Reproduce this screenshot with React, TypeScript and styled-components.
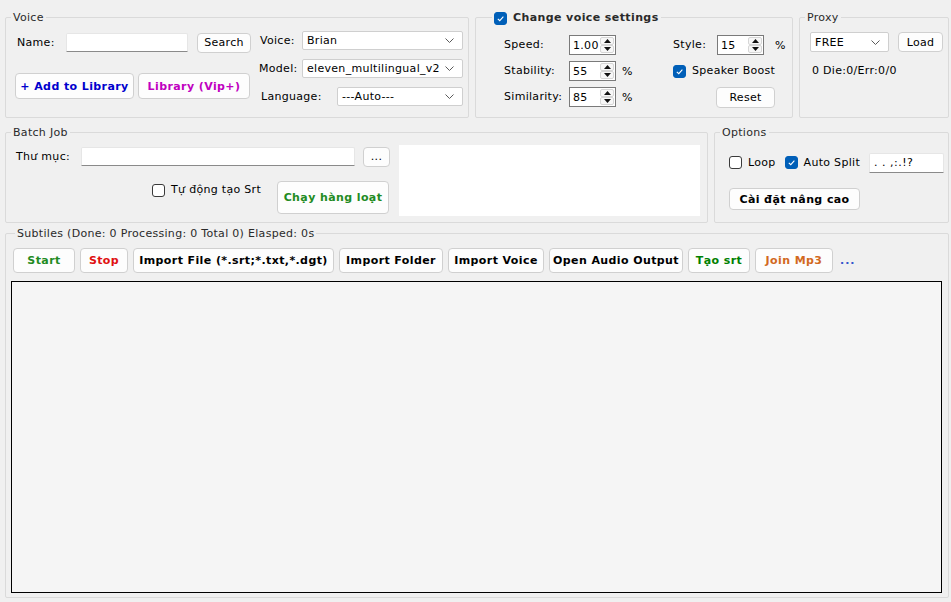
import React from "react";
import styled, { createGlobalStyle } from "styled-components";

const GlobalStyle = createGlobalStyle`
  html, body {
    margin: 0;
    padding: 0;
    background: #f0f0f0;
  }
  body {
    font-family: "DejaVu Sans", Verdana, sans-serif;
    font-size: 11px;
    letter-spacing: 0.3px;
    color: #000;
  }
  #root {
    width: 951px;
    height: 602px;
    overflow: hidden;
  }
`;

const Page = styled.div`
  display: flex;
  flex-direction: column;
  padding: 17px 0 0 5px;
`;

const Row = styled.div<{ $gap: number; $top?: number }>`
  display: flex;
  gap: ${(p) => p.$gap}px;
  margin-top: ${(p) => p.$top ?? 0}px;
`;

const Group = styled.section<{ $w: number; $h: number }>`
  width: ${(p) => p.$w}px;
  height: ${(p) => p.$h}px;
  box-sizing: border-box;
  border: 1px solid #dadada;
  border-radius: 2px;
  display: flex;
  flex-direction: column;
`;

const GroupTitle = styled.div<{ $inset?: number; $bold?: boolean }>`
  display: flex;
  align-items: center;
  gap: 6px;
  align-self: flex-start;
  height: 14px;
  line-height: 14px;
  margin: -7px 0 -1px ${(p) => p.$inset ?? 5}px;
  padding: 0 2px;
  background: #f0f0f0;
  color: #2a2a2a;
  font-weight: ${(p) => (p.$bold ? 700 : 400)};
  letter-spacing: ${(p) => (p.$bold ? "0.4px" : "0.3px")};
  white-space: nowrap;
`;

const Label = styled.span<{ $w?: number; $ml?: number }>`
  display: inline-block;
  width: ${(p) => (p.$w ? `${p.$w}px` : "auto")};
  margin-left: ${(p) => p.$ml ?? 0}px;
  flex: none;
  white-space: nowrap;
  line-height: 14px;
`;

const TextField = styled.div<{ $w: number; $h?: number; $ml?: number }>`
  width: ${(p) => p.$w}px;
  height: ${(p) => p.$h ?? 19}px;
  margin-left: ${(p) => p.$ml ?? 0}px;
  box-sizing: border-box;
  background: #fff;
  border: 1px solid #e6e6e6;
  border-bottom-color: #8a8a8a;
  border-radius: 2px 2px 0 0;
  padding: 2px 4px 0;
  line-height: 14px;
  letter-spacing: 0.5px;
  flex: none;
`;

const Button = styled.button<{ $w: number; $h: number; $color?: string; $bold?: boolean; $ml?: number }>`
  width: ${(p) => p.$w}px;
  height: ${(p) => p.$h}px;
  margin-left: ${(p) => p.$ml ?? 0}px;
  box-sizing: border-box;
  flex: none;
  padding: 0;
  background: #fdfdfd;
  border: 1px solid #d0d0d0;
  border-radius: 4px;
  font-family: inherit;
  font-size: 11px;
  font-weight: ${(p) => (p.$bold ? 700 : 400)};
  letter-spacing: ${(p) => (p.$bold ? "0.4px" : "0.3px")};
  color: ${(p) => p.$color ?? "#000"};
  white-space: nowrap;
  cursor: default;
`;

const ComboBox = styled.div<{ $w: number; $h?: number; $left?: boolean }>`
  width: ${(p) => p.$w}px;
  height: ${(p) => p.$h ?? 19}px;
  margin-left: ${(p) => (p.$left ? "0" : "auto")};
  box-sizing: border-box;
  flex: none;
  background: #fff;
  border: 1px solid #cfcfcf;
  border-radius: 2px;
  display: flex;
  align-items: center;
  justify-content: space-between;
  padding: 0 8px 0 4px;
`;

const CheckBox = styled.span<{ $on?: boolean }>`
  width: 13px;
  height: 13px;
  box-sizing: border-box;
  border-radius: 3px;
  flex: none;
  display: inline-flex;
  align-items: center;
  justify-content: center;
  background: ${(p) => (p.$on ? "#005fb8" : "#fff")};
  border: 1px solid ${(p) => (p.$on ? "#005fb8" : "#3a3a3a")};
`;

const CheckRow = styled.label`
  display: inline-flex;
  align-items: center;
  gap: 6px;
  white-space: nowrap;
  line-height: 14px;
`;

const NumBox = styled.div`
  width: 47px;
  height: 20px;
  box-sizing: border-box;
  background: #fff;
  border: 1px solid #7a7a7a;
  display: flex;
  align-items: center;
  padding-left: 3px;
`;

const NumValue = styled.span`
  flex: 1;
`;

const Spinner = styled.div`
  width: 14px;
  height: 16px;
  margin-right: 1px;
  display: flex;
  flex-direction: column;
`;

const SpinHalf = styled.div`
  flex: 1;
  display: flex;
  align-items: center;
  justify-content: center;
  border: 1px solid #d6d6d6;
  border-radius: 2px;
  background: #f7f7f7;
`;

/* voice */
const VoiceBody = styled.div`
  display: flex;
  gap: 8px;
  padding-left: 9px;
`;

const VoiceLeft = styled.div`
  width: 236px;
  padding-top: 9px;
  display: flex;
  flex-direction: column;
`;

const FieldRow = styled.div<{ $h?: number; $top?: number; $gap?: number }>`
  display: flex;
  align-items: center;
  height: ${(p) => p.$h ?? 19}px;
  margin-top: ${(p) => p.$top ?? 0}px;
  gap: ${(p) => p.$gap ?? 0}px;
`;

const VoiceRight = styled.div`
  width: 204px;
  padding-top: 7px;
  display: flex;
  flex-direction: column;
  gap: 9px;
`;

/* voice settings */
const SettingsGrid = styled.div`
  display: grid;
  grid-template-columns: 65px 47px 57px 44px 47px auto;
  grid-auto-rows: 20px;
  row-gap: 6px;
  align-items: center;
  padding: 11px 0 0 28px;
`;

const Pct = styled.span<{ $pl: number }>`
  padding-left: ${(p) => p.$pl}px;
`;

const Span = styled.div<{ $from: number; $to: number }>`
  grid-column: ${(p) => p.$from} / ${(p) => p.$to};
  display: flex;
  align-items: center;
`;

/* proxy */
const ProxyBody = styled.div`
  padding: 8px 0 0 10px;
  display: flex;
  flex-direction: column;
`;

const Stat = styled.div`
  margin-top: 12px;
  padding-left: 2px;
  line-height: 14px;
`;

/* batch */
const BatchBody = styled.div`
  display: flex;
  padding: 6px 0 0 9px;
`;

const BatchLeft = styled.div`
  width: 374px;
  display: flex;
  flex-direction: column;
`;

const RunRow = styled.div`
  display: flex;
  justify-content: flex-end;
  align-items: flex-start;
  gap: 16px;
  margin-top: 15px;
`;

const NudgeDown = styled.div<{ $y: number }>`
  margin-top: ${(p) => p.$y}px;
`;

const NoteBox = styled.div`
  width: 301px;
  height: 71px;
  margin-left: 10px;
  background: #fff;
`;

/* options */
const OptionsBody = styled.div`
  display: flex;
  flex-direction: column;
  padding: 14px 5px 0 14px;
`;

const OptionsRow = styled.div`
  display: flex;
  align-items: center;
  height: 19px;
  gap: 9px;
`;

/* subtitles */
const Toolbar = styled.div`
  display: flex;
  align-items: center;
  gap: 5px;
  padding: 8px 0 0 7px;
`;

const MoreLink = styled.span`
  margin-left: 2px;
  color: #3355cc;
  font-weight: 700;
  letter-spacing: 1px;
`;

const LogBox = styled.div`
  width: 931px;
  height: 312px;
  margin: 8px 0 0 5px;
  box-sizing: border-box;
  border: 1px solid #000;
  background: #f5f5f5;
`;

const Chevron = () => (
  <svg width="9" height="5" viewBox="0 0 9 5">
    <polyline points="0.5,0.5 4.5,4.5 8.5,0.5" fill="none" stroke="#5a5a5a" strokeWidth="1" />
  </svg>
);

const Tick = () => (
  <svg width="9" height="9" viewBox="0 0 10 10">
    <path d="M2 5.3 L4.2 7.4 L8.2 3" fill="none" stroke="#fff" strokeWidth="1.2" />
  </svg>
);

const Check: React.FC<{ on?: boolean; children?: React.ReactNode }> = ({ on, children }) => (
  <CheckRow>
    <CheckBox $on={on}>{on && <Tick />}</CheckBox>
    {children}
  </CheckRow>
);

const Combo: React.FC<{ w: number; h?: number; value: string; left?: boolean }> = ({ w, h, value, left }) => (
  <ComboBox $w={w} $h={h} $left={left}>
    <span>{value}</span>
    <Chevron />
  </ComboBox>
);

const Numeric: React.FC<{ value: string }> = ({ value }) => (
  <NumBox>
    <NumValue>{value}</NumValue>
    <Spinner>
      <SpinHalf>
        <svg width="7" height="4" viewBox="0 0 7 4">
          <polygon points="0,4 3.5,0 7,4" fill="#111" />
        </svg>
      </SpinHalf>
      <SpinHalf>
        <svg width="7" height="4" viewBox="0 0 7 4">
          <polygon points="0,0 3.5,4 7,0" fill="#111" />
        </svg>
      </SpinHalf>
    </Spinner>
  </NumBox>
);

const App: React.FC = () => {
  return (
    <>
      <GlobalStyle />
      <Page>
        <Row $gap={6}>
          <Group $w={464} $h={101}>
            <GroupTitle>Voice</GroupTitle>
            <VoiceBody>
              <VoiceLeft>
                <FieldRow>
                  <Label $w={49} $ml={2}>Name:</Label>
                  <TextField $w={122} />
                  <Button $w={54} $h={20} $ml={9}>Search</Button>
                </FieldRow>
                <FieldRow $h={26} $top={21} $gap={4}>
                  <Button $w={119} $h={26} $bold $color="#0000cd">+ Add to Library</Button>
                  <Button $w={112} $h={26} $bold $color="#c000c0">Library (Vip+)</Button>
                </FieldRow>
              </VoiceLeft>
              <VoiceRight>
                <FieldRow>
                  <Label $ml={1}>Voice:</Label>
                  <Combo w={161} value="Brian" />
                </FieldRow>
                <FieldRow>
                  <Label>Model:</Label>
                  <Combo w={161} value="eleven_multilingual_v2" />
                </FieldRow>
                <FieldRow>
                  <Label $ml={2}>Language:</Label>
                  <Combo w={126} value="---Auto---" />
                </FieldRow>
              </VoiceRight>
            </VoiceBody>
          </Group>

          <Group $w={318} $h={101}>
            <GroupTitle $inset={16} $bold>
              <CheckBox $on>
                <Tick />
              </CheckBox>
              Change voice settings
            </GroupTitle>
            <SettingsGrid>
              <Label>Speed:</Label>
              <Numeric value="1.00" />
              <span />
              <Label>Style:</Label>
              <Numeric value="15" />
              <Pct $pl={11}>%</Pct>

              <Label>Stability:</Label>
              <Numeric value="55" />
              <Pct $pl={6}>%</Pct>
              <Span $from={4} $to={7}>
                <Check on>Speaker Boost</Check>
              </Span>

              <Label>Similarity:</Label>
              <Numeric value="85" />
              <Pct $pl={6}>%</Pct>
              <span />
              <Span $from={5} $to={7}>
                <Button $w={59} $h={21} $ml={-1}>Reset</Button>
              </Span>
            </SettingsGrid>
          </Group>

          <Group $w={150} $h={101}>
            <GroupTitle>Proxy</GroupTitle>
            <ProxyBody>
              <FieldRow $h={20} $gap={9}>
                <Combo w={79} h={20} value="FREE" left />
                <Button $w={45} $h={20}>Load</Button>
              </FieldRow>
              <Stat>0 Die:0/Err:0/0</Stat>
            </ProxyBody>
          </Group>
        </Row>

        <Row $gap={6} $top={14}>
          <Group $w={703} $h={91}>
            <GroupTitle>Batch Job</GroupTitle>
            <BatchBody>
              <BatchLeft>
                <FieldRow $top={2} $gap={8}>
                  <Label $w={57} $ml={1}>Thư mục:</Label>
                  <TextField $w={274} />
                  <Button $w={27} $h={20}>...</Button>
                </FieldRow>
                <RunRow>
                  <NudgeDown $y={2}>
                    <Check>Tự động tạo Srt</Check>
                  </NudgeDown>
                  <Button $w={112} $h={33} $bold $color="#228b22">Chạy hàng loạt</Button>
                </RunRow>
              </BatchLeft>
              <NoteBox />
            </BatchBody>
          </Group>

          <Group $w={235} $h={91}>
            <GroupTitle>Options</GroupTitle>
            <OptionsBody>
              <OptionsRow>
                <Check>Loop</Check>
                <Check on>Auto Split</Check>
                <TextField $w={75} $h={20} style={{ marginLeft: "auto" }}>. . ,:.!?</TextField>
              </OptionsRow>
              <FieldRow $h={22} $top={16}>
                <Button $w={131} $h={22} $bold>Cài đặt nâng cao</Button>
              </FieldRow>
            </OptionsBody>
          </Group>
        </Row>

        <Row $gap={0} $top={10}>
          <Group $w={944} $h={365}>
            <GroupTitle $inset={9}>Subtiles (Done: 0 Processing: 0 Total 0) Elasped: 0s</GroupTitle>
            <Toolbar>
              <Button $w={62} $h={25} $bold $color="#228b22">Start</Button>
              <Button $w={48} $h={25} $bold $color="#e01010">Stop</Button>
              <Button $w={201} $h={25} $bold>Import File (*.srt;*.txt,*.dgt)</Button>
              <Button $w={104} $h={25} $bold>Import Folder</Button>
              <Button $w={96} $h={25} $bold>Import Voice</Button>
              <Button $w={134} $h={25} $bold>Open Audio Output</Button>
              <Button $w={62} $h={25} $bold $color="#008000">Tạo srt</Button>
              <Button $w={78} $h={25} $bold $color="#d2691e">Join Mp3</Button>
              <MoreLink>...</MoreLink>
            </Toolbar>
            <LogBox />
          </Group>
        </Row>
      </Page>
    </>
  );
};

export default App;
